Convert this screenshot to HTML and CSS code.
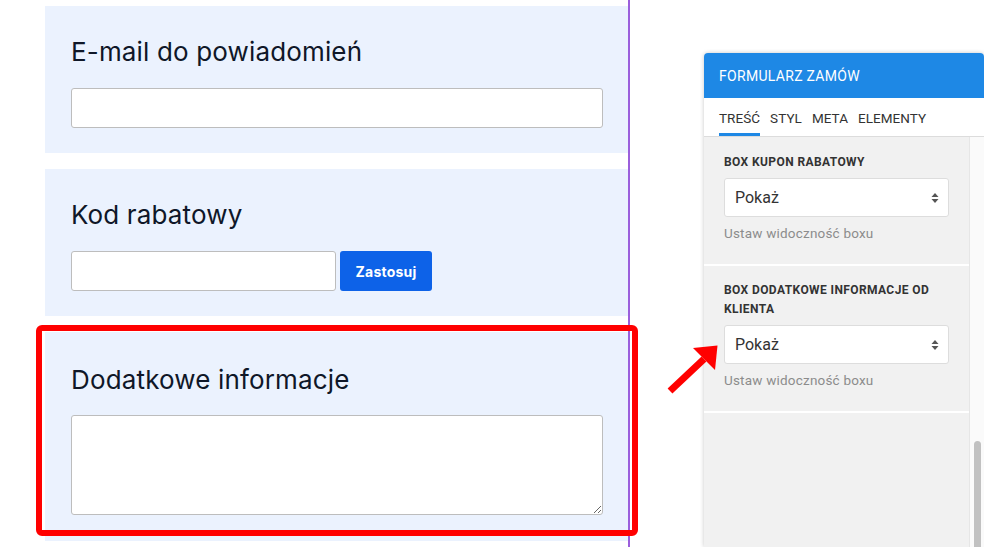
FILE: index.html
```
<!DOCTYPE html>
<html lang="pl">
<head>
<meta charset="utf-8">
<title>Formularz zamów</title>
<link rel="stylesheet" href="styles.css">
</head>
<body>
<div class="page">
  <main class="content">
    <section class="card">
      <h2 class="card-title">E-mail do powiadomień</h2>
      <input class="field field-full" type="text">
    </section>
    <section class="card">
      <h2 class="card-title">Kod rabatowy</h2>
      <div class="coupon">
        <input class="field field-coupon" type="text">
        <button class="btn-apply" type="button">Zastosuj</button>
      </div>
    </section>
    <section class="card card-last">
      <h2 class="card-title">Dodatkowe informacje</h2>
      <textarea class="field field-area"></textarea>
    </section>
  </main>

  <aside class="panel">
    <div class="panel-header">FORMULARZ ZAMÓW</div>
    <nav class="tabs">
      <span class="tab tab-active">TREŚĆ</span>
      <span class="tab">STYL</span>
      <span class="tab">META</span>
      <span class="tab">ELEMENTY</span>
    </nav>
    <div class="panel-body">
      <div class="panel-scroll">
        <div class="option">
          <div class="option-label">BOX KUPON RABATOWY</div>
          <div class="select">
            <span>Pokaż</span>
            <svg class="select-arrows" width="8" height="12" viewBox="0 0 8 12"><path d="M4 1 L7.5 5 L0.5 5 Z M4 11 L7.5 7 L0.5 7 Z" fill="#555"/></svg>
          </div>
          <div class="option-help">Ustaw widoczność boxu</div>
        </div>
        <div class="option">
          <div class="option-label">BOX DODATKOWE INFORMACJE OD KLIENTA</div>
          <div class="select">
            <span>Pokaż</span>
            <svg class="select-arrows" width="8" height="12" viewBox="0 0 8 12"><path d="M4 1 L7.5 5 L0.5 5 Z M4 11 L7.5 7 L0.5 7 Z" fill="#555"/></svg>
          </div>
          <div class="option-help">Ustaw widoczność boxu</div>
        </div>
      </div>
      <div class="scrollbar"><div class="scroll-thumb"></div></div>
    </div>
  </aside>
</div>

<div class="highlight"></div>
<svg class="pointer" width="70" height="70" viewBox="0 0 70 70">
  <line x1="10" y1="61" x2="44" y2="29" stroke="#ff0000" stroke-width="7"/>
  <polygon points="33,18 57.5,15.5 55,40" fill="#ff0000"/>
</svg>
</body>
</html>
```
FILE: styles.css
```
html, body {
  margin: 0;
  padding: 0;
  background: #ffffff;
  overflow: hidden;
}
body {
  width: 984px;
  height: 547px;
  position: relative;
  font-family: Inter, "Noto Sans", sans-serif;
}
.page {
  display: flex;
  align-items: flex-start;
  height: 547px;
}
.content {
  height: 547px;
  padding: 6px 0 0 45px;
  box-sizing: border-box;
  width: 630px;
  flex-shrink: 0;
  border-right: 2px solid #9b5fdc;
  display: flex;
  flex-direction: column;
  gap: 16px;
}
.card {
  width: 583px;
  box-sizing: border-box;
  background: #ebf2fe;
  padding: 26px 25px 25px 26px;
}
.card-last {
  padding-top: 28px;
  padding-bottom: 26px;
}
.card-title {
  margin: 0 0 16px 0;
  font-size: 26px;
  line-height: 40px;
  font-weight: 400;
  color: #0f1728;
  letter-spacing: 0.15px;
}
.card-last .card-title {
  margin-bottom: 15px;
}
.field {
  display: block;
  box-sizing: border-box;
  border: 1px solid #bdbdbd;
  border-radius: 3px;
  background: #fff;
  margin: 0;
  padding: 0 8px;
  font: inherit;
}
.field-full {
  width: 532px;
  height: 40px;
}
.coupon {
  display: flex;
  gap: 4px;
}
.field-coupon {
  width: 265px;
  height: 40px;
}
.btn-apply {
  width: 92px;
  height: 40px;
  border: none;
  border-radius: 3px;
  background: #0d62e8;
  color: #fff;
  font-family: Inter, "Noto Sans", sans-serif;
  font-weight: 700;
  font-size: 14px;
  letter-spacing: 0.2px;
  padding: 0;
}
.field-area {
  width: 532px;
  height: 100px;
  resize: both;
}

/* panel */
.panel {
  margin-left: 74px;
  margin-top: 53px;
  width: 280px;
  height: 494px;
  flex-shrink: 0;
  display: flex;
  flex-direction: column;
  border-radius: 4px 4px 0 0;
  box-shadow: 0 0 4px rgba(0,0,0,0.22);
  font-family: Roboto, "Noto Sans", sans-serif;
  overflow: hidden;
}
.panel-header {
  flex-shrink: 0;
  height: 45px;
  background: #1e88e5;
  color: #fff;
  font-size: 14px;
  letter-spacing: 0.3px;
  display: flex;
  align-items: center;
  padding-left: 15px;
}
.tabs {
  flex-shrink: 0;
  height: 39px;
  box-sizing: border-box;
  background: #fff;
  border-bottom: 1px solid #dcdcdc;
  display: flex;
  align-items: flex-end;
  padding-left: 15px;
  gap: 10px;
}
.tab {
  font-size: 13.5px;
  color: #333;
  height: 35px;
  box-sizing: border-box;
  padding-top: 9px;
  border-bottom: 3px solid transparent;
  letter-spacing: 0.05px;
}
.tab-active {
  border-bottom-color: #1e88e5;
}
.panel-body {
  flex: 1;
  min-height: 0;
  display: flex;
  background: #f1f1f1;
  overflow: hidden;
}
.panel-scroll {
  flex: 1;
}
.option {
  padding: 16px 20px 23px 20px;
  border-bottom: 2px solid #ffffff;
}
.option + .option {
  padding-top: 15px;
}
.option-label {
  font-size: 12px;
  font-weight: 700;
  color: #333;
  line-height: 19px;
  letter-spacing: 0.4px;
}
.select {
  margin-top: 6px;
  height: 39px;
  box-sizing: border-box;
  background: #fff;
  border: 1px solid #dddddd;
  border-radius: 3px;
  display: flex;
  align-items: center;
  justify-content: space-between;
  padding: 0 9px 0 10px;
  font-size: 16px;
  color: #333;
}
.select-arrows {
  display: block;
}
.option-help {
  margin-top: 8px;
  font-size: 13.5px;
  line-height: 16px;
  color: #8c8c8c;
  letter-spacing: 0.2px;
}
.scrollbar {
  width: 15px;
  flex-shrink: 0;
  box-sizing: border-box;
  background: #fafafa;
  border-left: 1px solid #e6e6e6;
  padding: 304px 3px 0 4px;
}
.scroll-thumb {
  height: 106px;
  background: #c1c1c1;
  border-radius: 4px 4px 0 0;
}

/* annotations */
.highlight {
  position: absolute;
  left: 36px;
  top: 325px;
  width: 590px;
  height: 199px;
  border: 6px solid #ff0000;
  border-radius: 6px;
}
.pointer {
  position: absolute;
  left: 660px;
  top: 330px;
}
```
